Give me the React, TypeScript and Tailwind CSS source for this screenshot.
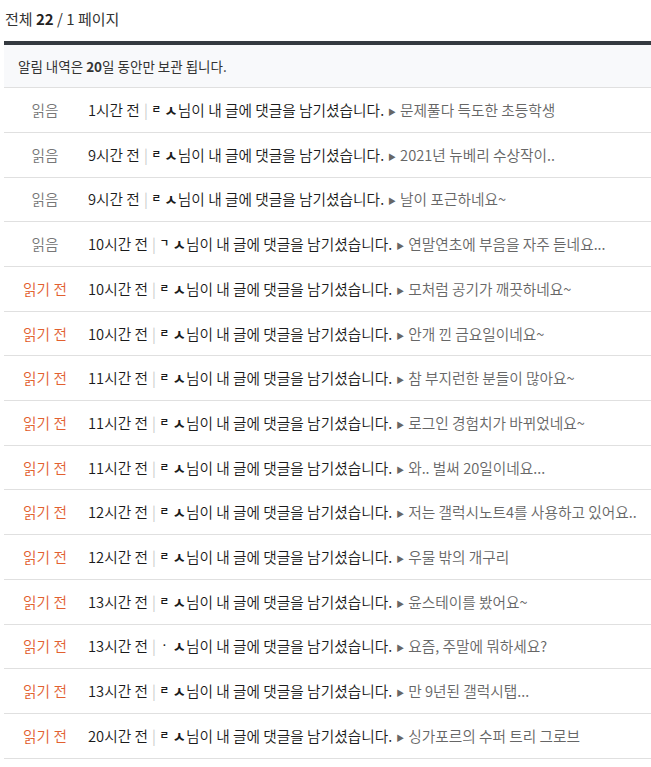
const rows: { read: boolean; time: string; nick: string; subject: string }[] = [
  { read: true, time: '1시간 전', nick: 'ㄹ', subject: '문제풀다 득도한 초등학생' },
  { read: true, time: '9시간 전', nick: 'ㄹ', subject: '2021년 뉴베리 수상작이..' },
  { read: true, time: '9시간 전', nick: 'ㄹ', subject: '날이 포근하네요~' },
  { read: true, time: '10시간 전', nick: 'ㄱ', subject: '연말연초에 부음을 자주 듣네요...' },
  { read: false, time: '10시간 전', nick: 'ㄹ', subject: '모처럼 공기가 깨끗하네요~' },
  { read: false, time: '10시간 전', nick: 'ㄹ', subject: '안개 낀 금요일이네요~' },
  { read: false, time: '11시간 전', nick: 'ㄹ', subject: '참 부지런한 분들이 많아요~' },
  { read: false, time: '11시간 전', nick: 'ㄹ', subject: '로그인 경험치가 바뀌었네요~' },
  { read: false, time: '11시간 전', nick: 'ㄹ', subject: '와.. 벌써 20일이네요...' },
  { read: false, time: '12시간 전', nick: 'ㄹ', subject: '저는 갤럭시노트4를 사용하고 있어요..' },
  { read: false, time: '12시간 전', nick: 'ㄹ', subject: '우물 밖의 개구리' },
  { read: false, time: '13시간 전', nick: 'ㄹ', subject: '윤스테이를 봤어요~' },
  { read: false, time: '13시간 전', nick: 'ㆍ', subject: '요즘, 주말에 뭐하세요?' },
  { read: false, time: '13시간 전', nick: 'ㄹ', subject: '만 9년된 갤럭시탭...' },
  { read: false, time: '20시간 전', nick: 'ㄹ', subject: '싱가포르의 수퍼 트리 그로브' },
];

function NoticeRow({ read, time, nick, subject }: (typeof rows)[number]) {
  return (
    <li className="flex h-[44.7px] items-center border-b border-[#e0e0e0] text-[14.7px] font-[350]">
      <span className={read ? 'w-[82px] text-center text-[#777]' : 'w-[82px] text-center text-[#e2602f]'}>
        {read ? '읽음' : '읽기 전'}
      </span>
      <span className="ml-[2px] whitespace-nowrap text-[#1a1a1a]">
        {time}
        <span className="mx-[4px] text-[#c8c8c8]">|</span>
        <b className="font-bold">
          <span className="relative -top-[3px] text-[10px]">{nick}</span> ㅅ
        </b>
        님이 내 글에 댓글을 남기셨습니다.
        <span className="relative -top-[1px] mx-[4px] text-[8px] text-[#666]">▶</span>
        <span className="text-[#666]">{subject}</span>
      </span>
    </li>
  );
}

export default function App() {
  return (
    <div className="min-h-screen bg-white pb-4 [font-family:'Noto_Sans_CJK_KR',sans-serif]">
      <div className="px-[5px] pt-[7px] pb-[11px] text-[15px] leading-[23px] text-[#333]">
        전체 <b className="font-bold text-[#222]">22</b> / 1 페이지
      </div>

      <div className="ml-[4px]">
        <div className="border-t-[4px] border-[#343a40] bg-[#f8f9fb] border-b border-b-[#e0e0e0] px-[14px] py-[11px] text-[13.5px] text-[#333]">
          알림 내역은 <b className="font-bold">20</b>일 동안만 보관 됩니다.
        </div>

        <ul>
          {rows.map((row, i) => (
            <NoticeRow key={i} {...row} />
          ))}
        </ul>
      </div>
    </div>
  );
}
